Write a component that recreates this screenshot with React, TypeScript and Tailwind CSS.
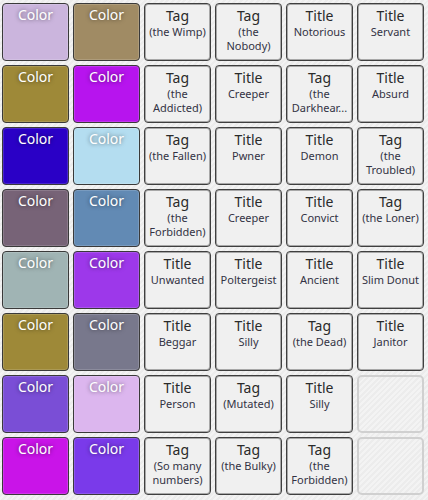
import React from "react";

type Cell =
  | { kind: "color"; bg: string }
  | { kind: "text"; title: string; sub: string }
  | { kind: "empty" };

const c = (bg: string): Cell => ({ kind: "color", bg });
const t = (title: string, sub: string): Cell => ({ kind: "text", title, sub });
const e: Cell = { kind: "empty" };

const rows: Cell[][] = [
  [c("#cbb5dd"), c("#a08b64"), t("Tag", "(the Wimp)"), t("Tag", "(the Nobody)"), t("Title", "Notorious"), t("Title", "Servant")],
  [c("#9e8938"), c("#b714ee"), t("Tag", "(the Addicted)"), t("Title", "Creeper"), t("Tag", "(the Darkhear..."), t("Title", "Absurd")],
  [c("#2a00c6"), c("#b4ddf0"), t("Tag", "(the Fallen)"), t("Title", "Pwner"), t("Title", "Demon"), t("Tag", "(the Troubled)")],
  [c("#776377"), c("#628ab4"), t("Tag", "(the Forbidden)"), t("Title", "Creeper"), t("Title", "Convict"), t("Tag", "(the Loner)")],
  [c("#a0b4b4"), c("#9d38ea"), t("Title", "Unwanted"), t("Title", "Poltergeist"), t("Title", "Ancient"), t("Title", "Slim Donut")],
  [c("#9e8938"), c("#78788c"), t("Title", "Beggar"), t("Title", "Silly"), t("Tag", "(the Dead)"), t("Title", "Janitor")],
  [c("#7a4ed6"), c("#dcb6ee"), t("Title", "Person"), t("Tag", "(Mutated)"), t("Title", "Silly"), e],
  [c("#c914e8"), c("#7a3aea"), t("Tag", "(So many numbers)"), t("Tag", "(the Bulky)"), t("Tag", "(the Forbidden)"), e],
];

function CellView({ cell }: { cell: Cell }) {
  if (cell.kind === "color") {
    return (
      <div
        className="rounded-[4px] border border-[#3a3a3a] shadow-[inset_0_0_0_1px_rgba(255,255,255,0.15)] flex flex-col items-center pt-[2px]"
        style={{ backgroundColor: cell.bg }}
      >
        <span className="text-white text-[14px] leading-[18px] [text-shadow:0_0_4px_rgba(0,0,0,0.55)]">
          Color
        </span>
      </div>
    );
  }
  if (cell.kind === "empty") {
    return <div className="rounded-[5px] border-2 border-[#d0d0d0]" />;
  }
  return (
    <div className="rounded-[4px] border border-[#3f3f3f] shadow-[inset_0_0_0_1px_#a8a8a8] bg-[#f0f0f0] flex flex-col items-center pt-[3px] px-[3px] text-center">
      <span className="text-[#2a2a2a] text-[14px] leading-[17px]">{cell.title}</span>
      <span className="text-[#333344] text-[11px] leading-[14px] mt-[1px]">{cell.sub}</span>
    </div>
  );
}

export default function App() {
  return (
    <div className="w-[428px] h-[500px] overflow-hidden font-['Noto_Sans','Open_Sans',sans-serif] bg-[repeating-linear-gradient(135deg,#f3f3f3_0px,#f3f3f3_2px,#ececec_2px,#ececec_4px)]">
      <div className="grid grid-cols-[repeat(6,67px)] auto-rows-[58px] gap-[4px] pl-[2px] pt-[3px]">
        {rows.flat().map((cell, i) => (
          <CellView key={i} cell={cell} />
        ))}
      </div>
    </div>
  );
}
